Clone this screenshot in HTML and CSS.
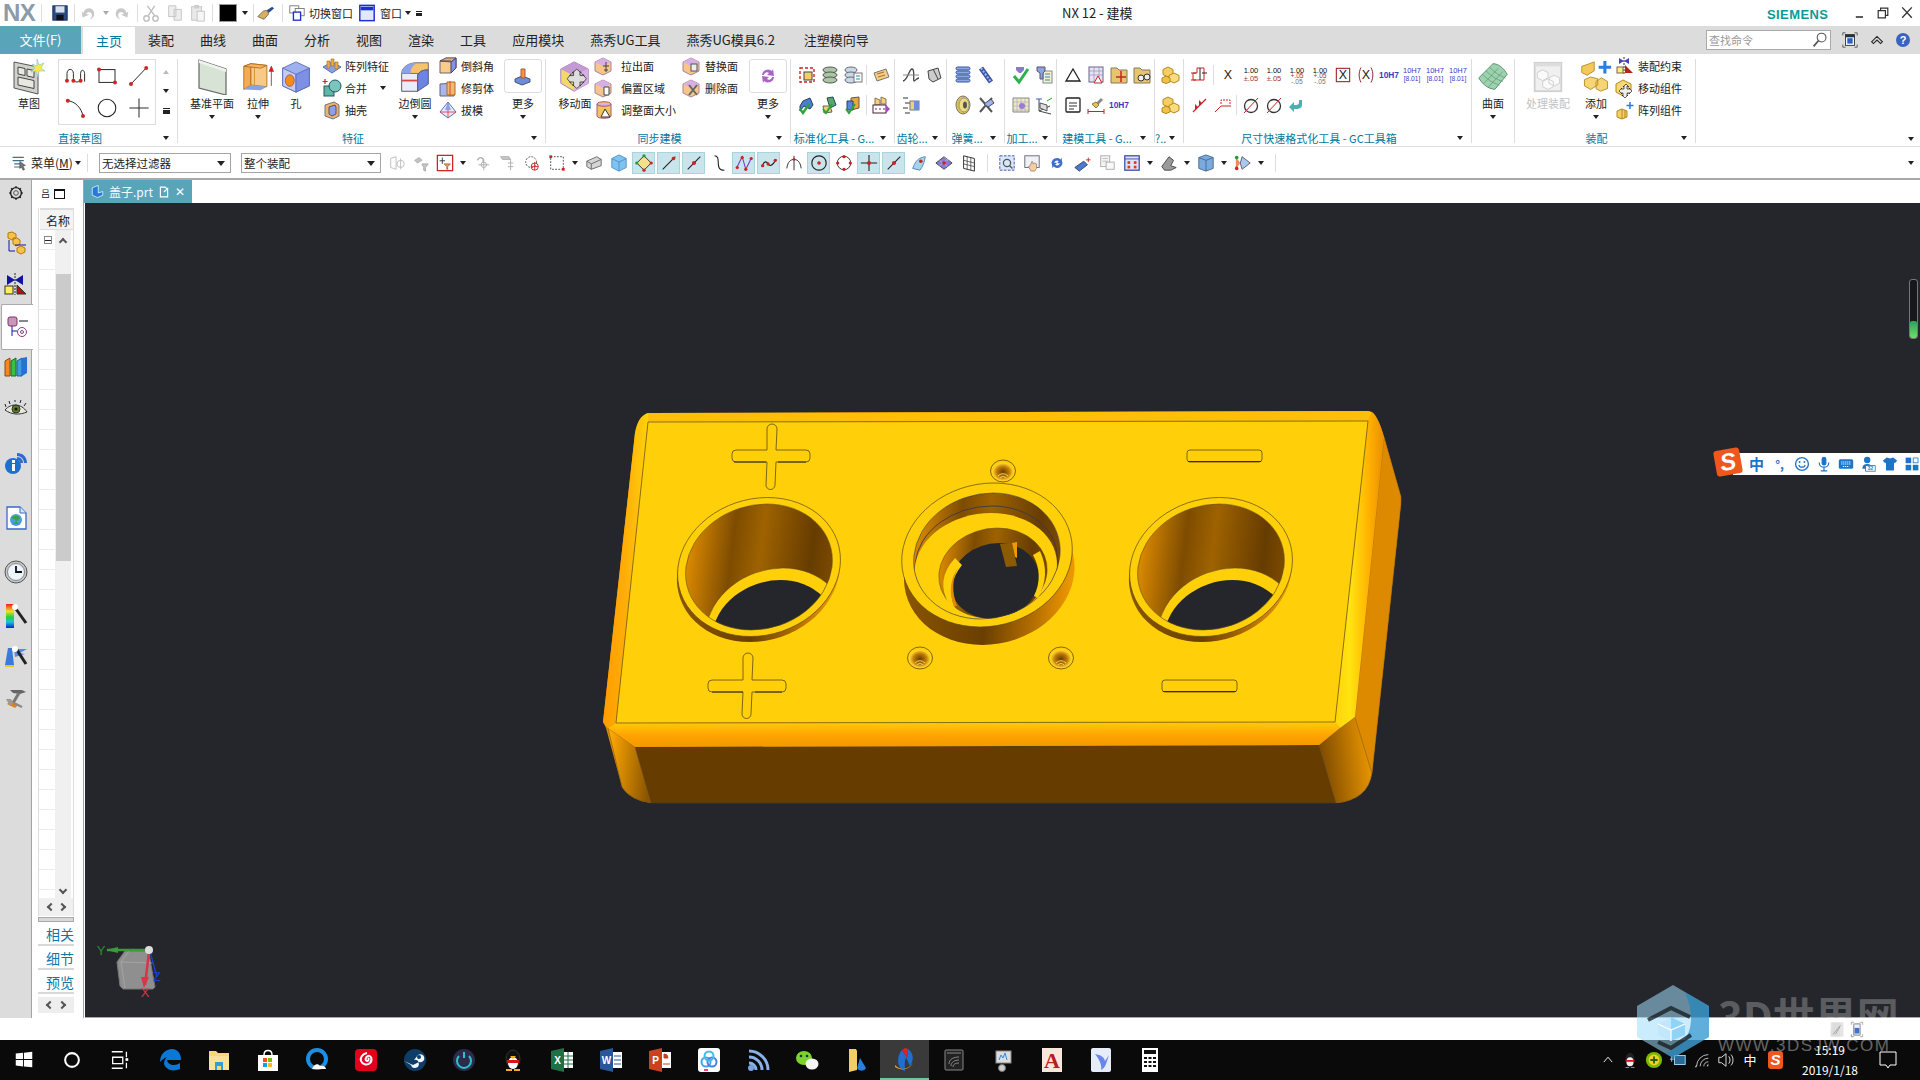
FILE: index.html
```html
<!DOCTYPE html>
<html lang="zh-CN">
<head>
<meta charset="utf-8">
<title>NX 12 - 建模</title>
<link rel="stylesheet" href="styles.css">
</head>
<body>
<svg class="defs" width="0" height="0">
<defs>
<symbol id="cube-y" viewBox="0 0 20 20"><path d="M10 2l7 4v8l-7 4-7-4V6z" fill="#f6cf62" stroke="#b5881c"/><path d="M3 6l7 4 7-4M10 10v8" fill="none" stroke="#b5881c"/></symbol>
<symbol id="cubes" viewBox="0 0 20 20"><path d="M7 2l5 2.500v5L7 12 2 9.500v-5z" fill="#f6cf62" stroke="#b5881c"/><path d="M13 8l5 2.500v5L13 18l-5-2.500v-5z" fill="#f9dc80" stroke="#b5881c"/><path d="M5 11l4 2v4l-4 1.500L1 17v-4z" fill="#f1c14a" stroke="#b5881c"/></symbol>
<symbol id="sk" viewBox="0 0 32 36"><path d="M1 3l24 5v27L1 29z" fill="#cfd2cc" stroke="#555"/><path d="M5 8l7 1.500v7l-7-1.500zM14 10l7 1.500v7l-7-1.500zM5 18l16 3.500v8L5 26z" fill="#e8e8e0" stroke="#444"/><path d="M24 0l2 6 5-2-3 5 4 3-6 0-1 6-2-6-5 1 4-4-3-4 5 2z" fill="#ffe94a" stroke="#7cc5d8" stroke-width=".6"/></symbol>
<symbol id="spl" viewBox="0 0 30 30"><path d="M5 22V12c0-7 8-7 8 0v6c0 6 9 6 9 0v-6c0-6 5-5 5 0v10" fill="none" stroke="#222" stroke-width="1.200"/><g fill="#d32323"><circle cx="5" cy="21" r="2.500"/><circle cx="13" cy="21" r="2.500"/><circle cx="22" cy="21" r="2.500"/></g></symbol>
<symbol id="rct" viewBox="0 0 30 30"><rect x="5" y="7" width="20" height="16" fill="none" stroke="#222" stroke-width="1.200"/><circle cx="5" cy="7" r="2.500" fill="#d32323"/><circle cx="25" cy="23" r="2.500" fill="#d32323"/></symbol>
<symbol id="lin" viewBox="0 0 30 30"><path d="M5 25L24 5" stroke="#222" stroke-width="1.200"/><circle cx="5" cy="25" r="2.500" fill="#d32323"/><circle cx="24" cy="5" r="2.500" fill="#d32323"/></symbol>
<symbol id="arc" viewBox="0 0 30 30"><path d="M5 6c10 0 18 9 20 19" fill="none" stroke="#222" stroke-width="1.200"/><circle cx="6" cy="6" r="2.500" fill="#d32323"/><circle cx="25" cy="25" r="2.500" fill="#d32323"/></symbol>
<symbol id="cir" viewBox="0 0 30 30"><circle cx="15" cy="15" r="11" fill="none" stroke="#222" stroke-width="1.300"/></symbol>
<symbol id="crs" viewBox="0 0 30 30"><path d="M15 3v24M3 15h24" stroke="#222" stroke-width="1.200"/></symbol>
<symbol id="plane" viewBox="0 0 32 36"><path d="M3 1l27 9v26L3 29z" fill="#d7e4d5" stroke="#666" stroke-width="1.200"/><path d="M3 1l27 9v3L3 4z" fill="#eef3ec"/></symbol>
<symbol id="extr" viewBox="0 0 36 36"><path d="M2 6l8-3v24l-8 5z" fill="#f1ad55" stroke="#b36a18"/><path d="M10 3l18 2v24l-18-2z" fill="#f8c987" stroke="#b36a18"/><path d="M2 6l8-3 18 2-7 3z" fill="#f4b565" stroke="#b36a18"/><path d="M14 8v22" stroke="#d18a2a"/><path d="M2 32l8-5 18 2-7 4z" fill="#8da0e0"/><path d="M33 28V8M30.500 12L33 6l2.500 6" stroke="#d02020" fill="#d02020"/></symbol>
<symbol id="hole" viewBox="0 0 36 36"><path d="M18 1l15 7v20l-15 7-15-7V8z" fill="#9fb0f0" stroke="#5a6bb8"/><path d="M3 8l15 7v20l-15-7z" fill="#c1ccf6" stroke="#5a6bb8"/><path d="M18 15l15-7v20l-15 7z" fill="#7d90e4" stroke="#5a6bb8"/><ellipse cx="11" cy="22" rx="5" ry="6.500" fill="#f18d1a" stroke="#a55"/></symbol>
<symbol id="blend" viewBox="0 0 36 36"><path d="M3 14c0-7 8-12 16-12h14v8c-8 0-12 3-12 8v16H3z" fill="#f6c36c" stroke="#666"/><path d="M3 14h18v20H3z" fill="#e9edf8" stroke="#667"/><path d="M3 14c0-7 8-12 16-12l2 0c-5 2-8 6-8 12z" fill="#8ca0ec"/><path d="M21 18c0-5 4-8 12-8v16l-12 8z" fill="#6c84e6" stroke="#557"/><path d="M3 22h18" stroke="#d44" stroke-width="2"/></symbol>
<symbol id="pat" viewBox="0 0 20 20"><path d="M1 11l9-5 9 5-9 6z" fill="#8aa0e6" stroke="#5a6bb8"/><path d="M5 5h3v7H5zM9 3h3v7H9zM13 6h3v7h-3z" fill="#f0ad3e" stroke="#b0741a" stroke-width=".7"/></symbol>
<symbol id="unite" viewBox="0 0 20 20"><rect x="2" y="8" width="10" height="10" fill="#5fb6a5" stroke="#256"/><circle cx="13" cy="8" r="6" fill="#7ac6bd" stroke="#256"/><path d="M3 1v5M.5 3.500h5" stroke="#d02020" stroke-width="1.200"/></symbol>
<symbol id="shell" viewBox="0 0 20 20"><path d="M3 5l9-3 5 3v11l-6 3-8-3z" fill="#f0b268" stroke="#678"/><path d="M7 7l6-2 1 2v7l-4 2-3-2z" fill="#8ca0ec" stroke="#556"/></symbol>
<symbol id="chamf" viewBox="0 0 20 20"><path d="M2 5l6-3h10v10l-5 5H2z" fill="#f8cc8a" stroke="#667"/><path d="M2 5l6-3 10 0-5 4z" fill="#f1ac62" stroke="#667"/><path d="M13 6l5-4v10l-5 5zM2 5h11" fill="#7f94e8" stroke="#446"/></symbol>
<symbol id="trim" viewBox="0 0 20 20"><path d="M2 6l14-1v13H2z" fill="#a8b6ee" stroke="#667"/><path d="M9 4h8v13H9z" fill="#f3b96f" stroke="#b36a18"/><path d="M12 3v15" stroke="#d44"/></symbol>
<symbol id="draft" viewBox="0 0 20 20"><path d="M10 2L2 12l8 6 8-6z" fill="#e8eaf8" stroke="#5a6bb8"/><path d="M10 2v16M2 12h16" stroke="#d44" stroke-width=".9"/><path d="M10 2l-3 8h6z" fill="#8ca0ec"/></symbol>
<symbol id="more" viewBox="0 0 20 20"><path d="M2 13l7-3 8 3v3l-8 3-7-3z" fill="#6f8bdc" stroke="#456"/><path d="M8 3h4v9H8z" fill="#f49a2c" stroke="#a55"/></symbol>
<symbol id="move" viewBox="0 0 36 36"><path d="M17 1l16 8v16l-16 9L2 25V9z" fill="#f3d86e" stroke="#9c77b8"/><path d="M17 1l16 8-16 8L2 9z" fill="#c49ad6"/><path d="M17 17l16-8v16l-16 9z" fill="#d8aee6"/><path d="M24 11v5h5l-2-2 5 6-5 6 2-2h-5v5l2-2-6 5-6-5 2 2v-5h-5l2 2-5-6 5-6-2 2h5v-5l-2 2 6-5 6 5z" transform="translate(2 2) scale(.9)" fill="#ddd" stroke="#333"/></symbol>
<symbol id="fpull" viewBox="0 0 20 20"><path d="M9 2l8 4v9l-8 4-8-4V6z" fill="#f6c58a" stroke="#a6839c"/><path d="M9 2l8 4-8 4-8-4z" fill="#d8aee6"/><path d="M12 6v10M9 10h6M10 14h4" stroke="#444"/></symbol>
<symbol id="foff" viewBox="0 0 20 20"><path d="M9 2l8 4v9l-8 4-8-4V6z" fill="#f6c58a" stroke="#a6839c"/><path d="M9 2l8 4-8 4-8-4z" fill="#d8aee6"/><path d="M10 9h5v8h-5z" fill="#fff" stroke="#444"/></symbol>
<symbol id="fres" viewBox="0 0 20 20"><path d="M3 4c0-3 14-3 14 0v12c0 3-14 3-14 0z" fill="#f0c65c" stroke="#a57"/><path d="M3 4c0 3 14 3 14 0" fill="#d8aee6" stroke="#a57"/><path d="M11 9l5 8H7z" fill="#fff" stroke="#333"/></symbol>
<symbol id="frep" viewBox="0 0 20 20"><path d="M9 2l8 4v9l-8 4-8-4V6z" fill="#f6c58a" stroke="#a6839c"/><path d="M9 2l8 4-8 4-8-4z" fill="#d8aee6"/><rect x="9" y="8" width="6" height="7" fill="#eee" stroke="#555"/></symbol>
<symbol id="fdel" viewBox="0 0 20 20"><path d="M9 2l8 4v9l-8 4-8-4V6z" fill="#f6c58a" stroke="#a6839c"/><path d="M9 2l8 4-8 4-8-4z" fill="#d8aee6"/><path d="M7 7l8 10M15 7l-8 10" stroke="#666" stroke-width="2"/></symbol>
<symbol id="rec" viewBox="0 0 20 20"><path d="M4 9a6 6 0 0 1 10-4l1-2 1 7-7-1 2-2a3 3 0 0 0-5 2zM16 11a6 6 0 0 1-10 4l-1 2-1-7 7 1-2 2a3 3 0 0 0 5-2z" fill="#a964c4"/></symbol>
<symbol id="t1" viewBox="0 0 20 20"><rect x="3" y="3" width="14" height="14" fill="none" stroke="#c22" stroke-dasharray="3 2" stroke-width="1.400"/><rect x="7" y="7" width="8" height="8" fill="#f6cf62" stroke="#444"/></symbol>
<symbol id="t2" viewBox="0 0 20 20"><g fill="#a9c7a4" stroke="#555"><ellipse cx="10" cy="5" rx="7" ry="3"/><ellipse cx="10" cy="10" rx="7" ry="3"/><ellipse cx="10" cy="15" rx="7" ry="3"/></g></symbol>
<symbol id="t3" viewBox="0 0 20 20"><g fill="#c9d9e5" stroke="#667"><ellipse cx="8" cy="5" rx="6" ry="3"/><ellipse cx="8" cy="10" rx="6" ry="3"/><ellipse cx="8" cy="15" rx="6" ry="3"/></g><rect x="11" y="8" width="8" height="9" fill="#fff" stroke="#777"/><path d="M13 11h4M13 14h4" stroke="#38a"/></symbol>
<symbol id="t4" viewBox="0 0 20 20"><path d="M3 8l12-4 3 8-12 4z" fill="#f2cf7f" stroke="#777"/><path d="M6 9l7-2M7 12l7-2" stroke="#a64"/></symbol>
<symbol id="t5" viewBox="0 0 20 20"><path d="M3 16l4-5 6 3 3-4-3-7-7 3-3 5z" fill="#4c7cd6" stroke="#245"/><path d="M3 14l3 4 6-9" fill="none" stroke="#2aa53a" stroke-width="2.400"/></symbol>
<symbol id="t6" viewBox="0 0 20 20"><path d="M7 3l6-1 3 8-6 3z" fill="#58a86a" stroke="#246"/><path d="M3 11l7 0 2 6-8 1z" fill="#ecd170" stroke="#665"/><path d="M3 14l3 4 6-9" fill="none" stroke="#2aa53a" stroke-width="2"/></symbol>
<symbol id="t7" viewBox="0 0 20 20"><path d="M8 3l8-1v11l-8 2z" fill="#e8a83a" stroke="#654"/><path d="M4 6l6 0v9H4z" fill="#5a86dc" stroke="#245"/><path d="M3 14l3 4 6-9" fill="none" stroke="#2aa53a" stroke-width="2"/></symbol>
<symbol id="t8" viewBox="0 0 20 20"><path d="M4 3l5 2v5H4zM10 2l5 2v5h-5z" fill="#f2cf7f" stroke="#875"/><rect x="2" y="10" width="13" height="8" fill="#fff" stroke="#423"/><path d="M4 14h2M8 14h2M12 14h2" stroke="#824"/><path d="M15 10l4 4-4 4z" fill="#a848c0"/></symbol>
<symbol id="g1" viewBox="0 0 20 20"><path d="M2 16c5-1 6-12 9-12s1 12 2 12 3-3 5-3" fill="none" stroke="#444" stroke-width="1.300"/><path d="M2 10h16" stroke="#888"/></symbol>
<symbol id="g2" viewBox="0 0 20 20"><path d="M4 6l10-3 3 10-8 4-4-3z" fill="#ccc" stroke="#444"/><path d="M9 4l5 10" stroke="#444"/></symbol>
<symbol id="g3" viewBox="0 0 20 20"><path d="M2 3h5M4 8h5M2 13h5M4 18h5" stroke="#333"/><rect x="9" y="6" width="9" height="9" fill="#f0cf7a" stroke="#778"/><rect x="13" y="6" width="5" height="9" fill="#6f8fd4"/></symbol>
<symbol id="sp1" viewBox="0 0 20 20"><g fill="#8ea6e4" stroke="#33559c"><rect x="3" y="2" width="14" height="3" rx="1.500"/><rect x="3" y="6" width="14" height="3" rx="1.500"/><rect x="3" y="10" width="14" height="3" rx="1.500"/><rect x="3" y="14" width="14" height="3" rx="1.500"/></g></symbol>
<symbol id="sp2" viewBox="0 0 20 20"><path d="M5 3l10 14" stroke="#3a56a8" stroke-width="5"/><path d="M5 3l10 14" stroke="#a8b8ea" stroke-width="2" stroke-dasharray="2 1.500"/></symbol>
<symbol id="sp3" viewBox="0 0 20 20"><ellipse cx="10" cy="10" rx="7" ry="9" fill="#dcc055" stroke="#776"/><ellipse cx="11" cy="10" rx="5" ry="7" fill="#efdc80" stroke="#997"/><ellipse cx="12" cy="10" rx="2" ry="3.500" fill="#555"/></symbol>
<symbol id="sp4" viewBox="0 0 20 20"><path d="M4 3l12 14M16 3L4 17" stroke="#555" stroke-width="2"/><path d="M8 9l7-5 3 4-6 4z" fill="#9fb2e6" stroke="#446"/></symbol>
<symbol id="m1" viewBox="0 0 20 20"><path d="M5 2h8v3l-3 3H8L5 5z" fill="#8a7ac8"/><path d="M3 11l5 6 9-13" fill="none" stroke="#2bb14d" stroke-width="3"/></symbol>
<symbol id="m2" viewBox="0 0 20 20"><rect x="9" y="6" width="9" height="12" fill="#f4f0d4" stroke="#888"/><path d="M11 9h5M11 12h5M11 15h5" stroke="#38a"/><path d="M3 2h8v4l-2 2v6H6V8L3 6z" fill="#8ea3e6" stroke="#556"/></symbol>
<symbol id="m3" viewBox="0 0 20 20"><path d="M2 3h16v14H2z" fill="#ece8c8" stroke="#888"/><path d="M2 7h16M2 11h16M2 15h16M6 3v14M10 3v14M14 3v14" stroke="#aaa" stroke-width=".6"/><circle cx="11" cy="11" r="3" fill="#9a7ae0"/></symbol>
<symbol id="m4" viewBox="0 0 20 20"><path d="M5 4v12l11-5M5 16l12 3" fill="none" stroke="#444"/><path d="M6 8l7 2v6l-7-3z" fill="#ddd" stroke="#555"/><path d="M2 4h6" stroke="#36c"/><path d="M13 6l5-3" stroke="#2a2"/></symbol>
<symbol id="b1" viewBox="0 0 20 20"><path d="M10 4l7 12H3z" fill="none" stroke="#222" stroke-width="1.300"/></symbol>
<symbol id="b2" viewBox="0 0 20 20"><rect x="3" y="2" width="14" height="15" fill="#e8e2f6" stroke="#668"/><path d="M3 6h14M3 10h14M8 2v15M13 2v15" stroke="#88a" stroke-width=".6"/><path d="M12 11l4 7H8z" fill="#fff" stroke="#c22"/></symbol>
<symbol id="b3" viewBox="0 0 20 20"><path d="M2 3h6l2 2h8v13H2z" fill="#e6c66c" stroke="#876"/><path d="M12 6v11M7 12h10" stroke="#c22" stroke-width="1.500"/></symbol>
<symbol id="b4" viewBox="0 0 20 20"><path d="M2 3h6l2 2h8v13H2z" fill="#e6c66c" stroke="#876"/><circle cx="9" cy="13" r="3" fill="#eee" stroke="#333"/><circle cx="15" cy="12" r="3" fill="#eee" stroke="#333"/></symbol>
<symbol id="b5" viewBox="0 0 20 20"><rect x="3" y="3" width="14" height="14" rx="1" fill="#fff" stroke="#222" stroke-width="1.300"/><path d="M6 8h8M6 11h8M6 14h5" stroke="#333"/></symbol>
<symbol id="b6" viewBox="0 0 20 20"><path d="M15 3l-5 5 2 2 5-5z" fill="#888"/><path d="M10 7l3 3-3 3-4-4z" fill="#e8c24a" stroke="#875"/><path d="M2 14v5M18 14v5M2 16.500h16" stroke="#c22"/></symbol>
<symbol id="tol" viewBox="0 0 24 24"><text x="12" y="10" class="svg-t8" fill="#111">1.00</text><text x="12" y="19" class="svg-t8" fill="#a33">±.05</text></symbol>
<symbol id="tol2" viewBox="0 0 24 24"><text x="12" y="9" class="svg-t8" fill="#111">1.00</text><text x="12" y="16" class="svg-t6" fill="#a33">+.05</text><text x="12" y="23" class="svg-t6" fill="#777">-.05</text></symbol>
<symbol id="hs" viewBox="0 0 24 24"><text x="12" y="15" class="svg-hb" fill="#3a3ac8">10H7</text></symbol>
<symbol id="hb" viewBox="0 0 24 24"><text x="12" y="9" class="svg-t8" fill="#3a3ac8">10H7</text><text x="12" y="19" class="svg-t7" fill="#3a3ac8">[8.01]</text></symbol>
<symbol id="x1" viewBox="0 0 24 24"><text x="12" y="17" class="svg-t14" fill="#222">X</text></symbol>
<symbol id="x2" viewBox="0 0 24 24"><rect x="4" y="4" width="16" height="16" fill="none" stroke="#923" stroke-width="1.300"/><text x="12" y="17" class="svg-t14" fill="#222">X</text></symbol>
<symbol id="x3" viewBox="0 0 24 24"><path d="M6 3c-3 6-3 12 0 18M18 3c3 6 3 12 0 18" fill="none" stroke="#923" stroke-width="1.200"/><text x="12" y="17" class="svg-t14" fill="#222">X</text></symbol>
<symbol id="d1" viewBox="0 0 20 20"><path d="M3 15v-7h4v-5h7v12zM1 8h5M1 15h5" fill="none" stroke="#c22"/><path d="M10 3v12M12 8h5" stroke="#222"/></symbol>
<symbol id="d2" viewBox="0 0 20 20"><path d="M3 17L16 4" stroke="#c22" stroke-width="1.200"/><path d="M5 9l3 3-3 3zM9 5l3 3-3 3z" fill="#c22"/></symbol>
<symbol id="d3" viewBox="0 0 20 20"><path d="M2 17l6-6h10" fill="none" stroke="#c22"/><path d="M8 9V5h9v4" fill="none" stroke="#c22" stroke-dasharray="2 1"/></symbol>
<symbol id="d4" viewBox="0 0 20 20"><circle cx="10" cy="11" r="6.500" fill="none" stroke="#333" stroke-width="1.300"/><path d="M3 18L17 3" stroke="#c22"/></symbol>
<symbol id="ret" viewBox="0 0 20 20"><path d="M15 5v5c0 3-3 4-6 4H7v3l-5-5 5-5v3h2c2 0 3-1 3-3V5z" fill="#4bb0b0"/></symbol>
<symbol id="surf" viewBox="0 0 36 36"><path d="M2 19L18 3c6 0 12 5 16 12L20 32c-8-1-14-6-18-13z" fill="#9ed1ae" stroke="#4e8a68"/><path d="M6 15c6 6 12 10 19 12M10 11c6 6 12 10 19 12M14 7c6 6 12 10 18 12M8 25L24 8M13 29L29 12" fill="none" stroke="#5b9a78" stroke-width=".8"/></symbol>
<symbol id="proc" viewBox="0 0 36 36"><rect x="3" y="2" width="30" height="32" fill="#f0f0f0" stroke="#cfcfcf" stroke-width="2"/><path d="M3 2h30v4H3z" fill="#ddd"/><path d="M12 10l6 3v6l-6 3-6-3v-6zM18 20l6 3v6l-6 3-6-3v-6zM25 16l6 3v6l-6 3-6-3v-6z" fill="#fafafa" stroke="#ccc"/></symbol>
<symbol id="add" viewBox="0 0 36 36"><path d="M8 4l8-3v10l-8 5-6-3V6z" fill="#f4c95a" stroke="#b5881c"/><path d="M12 18l8 2v7l-8 5-7-4v-7zM24 19l7 4v8l-8 3-5-3v-8z" fill="#f6d576" stroke="#b5881c"/><path d="M28 0v14M21 7h14" stroke="#2c7be0" stroke-width="3.400"/></symbol>
<symbol id="asm1" viewBox="0 0 20 20"><path d="M4 2l5 3 5-3v6l-5-3-5 3z" fill="#4a44c2"/><path d="M9 1v18" stroke="#333" stroke-dasharray="2 1"/><rect x="2" y="11" width="6" height="6" fill="#ffee7a" stroke="#765"/><path d="M10 17v-8l8 8z" fill="#b82418"/></symbol>
<symbol id="asm2" viewBox="0 0 20 20"><path d="M8 2l8 4v8l-8 4-7-4V6z" fill="#f8d778" stroke="#b5881c"/><path d="M12 8v3h3l-1-1 3 3-3 3 1-1h-3v3l1-1-3 3-3-3 1 1v-3H6l1 1-3-3 3-3-1 1h3v-3l-1 1 3-3 3 3z" fill="#eee" stroke="#222" stroke-width=".7"/></symbol>
<symbol id="asm3" viewBox="0 0 20 20"><path d="M2 11l5-2 5 2v6l-5 2-5-2z" fill="#f6cf62" stroke="#b5881c"/><path d="M7 9v10M10 10v8" stroke="#b5881c"/><path d="M15 2v7M11.500 5.500h7" stroke="#2c7be0" stroke-width="1.500"/></symbol>
<symbol id="undo" viewBox="0 0 20 20"><path d="M5 10c1-7 11-7 12 0 0 4-2 6-5 7 2-2 3-4 2-6-1-3-5-3-6 0l3 1-7 3-1-7z" fill="#c8c8c8"/></symbol>
<symbol id="redo" viewBox="0 0 20 20"><path d="M15 10c-1-7-11-7-12 0 0 4 2 6 5 7-2-2-3-4-2-6 1-3 5-3 6 0l-3 1 7 3 1-7z" fill="#c8c8c8"/></symbol>
<symbol id="f1" viewBox="0 0 20 20"><g fill="none" stroke="#bbb"><path d="M3 5l6-2v14l-6-2z"/><circle cx="14" cy="11" r="4"/><path d="M14 5v12"/></g></symbol>
<symbol id="f2" viewBox="0 0 20 20"><path d="M3 7l5-3 3 3-5 3zM11 11h7l-3 4v4l-2-1v-3z" fill="#c4c4c4" stroke="#aaa"/></symbol>
<symbol id="f3" viewBox="0 0 20 20"><rect x="1.500" y="1.500" width="17" height="17" fill="#fff" stroke="#c22" stroke-width="1.400"/><path d="M7 4v7M4 7.500h6" stroke="#333"/><path d="M9 11h7l-3 3v3l-1 0v-3z" fill="#e8a820" stroke="#a66"/></symbol>
<symbol id="f4" viewBox="0 0 20 20"><path d="M5 7c2-5 8-3 6 2" fill="none" stroke="#aaa" stroke-width="1.500"/><path d="M12 6v12M6 12h12" stroke="#aaa"/><circle cx="12" cy="12" r="3" fill="none" stroke="#aaa"/></symbol>
<symbol id="f5" viewBox="0 0 20 20"><path d="M3 3h9l2 3-9 0zM14 6v12M11 10h6M11 14h6" fill="#c8c8c8" stroke="#aaa"/></symbol>
<symbol id="f6" viewBox="0 0 20 20"><circle cx="9" cy="9" r="6" fill="none" stroke="#444" stroke-dasharray="2 1.500"/><circle cx="13" cy="14" r="4" fill="none" stroke="#c22"/><path d="M13 9v9M9 14h8" stroke="#c22"/></symbol>
<symbol id="f7" viewBox="0 0 20 20"><rect x="3" y="3" width="14" height="14" fill="none" stroke="#444" stroke-dasharray="2 1.500"/><rect x="1.500" y="1.500" width="3" height="3" fill="#c22"/><rect x="15.500" y="15.500" width="3" height="3" fill="#c22"/></symbol>
<symbol id="f8" viewBox="0 0 20 20"><path d="M2 8l11-5 5 3v7L7 17l-5-3z" fill="#d5d5d5" stroke="#666"/><path d="M2 8l5 3v6M7 11l11-5" fill="none" stroke="#666"/></symbol>
<symbol id="f9" viewBox="0 0 20 20"><path d="M10 1l8 4v10l-8 4-8-4V5z" fill="#7fc4ef" stroke="#4a90c8"/><path d="M2 5l8 4 8-4M10 9v10" fill="none" stroke="#4a90c8"/></symbol>
<symbol id="f10" viewBox="0 0 20 20"><path d="M10 2l8 8-8 8-8-8z" fill="#f4e08a" stroke="#222"/><circle cx="10" cy="2" r="1.800" fill="#1a9e33"/><circle cx="18" cy="10" r="1.800" fill="#c22"/><circle cx="10" cy="18" r="1.800" fill="#c22"/><circle cx="2" cy="10" r="1.800" fill="#1a9e33"/></symbol>
<symbol id="f11" viewBox="0 0 20 20"><path d="M3 17L17 3" stroke="#222" stroke-width="1.200"/><circle cx="15" cy="5" r="2" fill="#c22"/></symbol>
<symbol id="f12" viewBox="0 0 20 20"><path d="M3 17L17 3" stroke="#222" stroke-width="1.200"/><circle cx="10" cy="10" r="2.300" fill="#c22"/></symbol>
<symbol id="f13" viewBox="0 0 20 20"><path d="M5 2c6 0 3 8 5 13 1 3 3 3 6 3" fill="none" stroke="#222" stroke-width="1.200"/></symbol>
<symbol id="f14" viewBox="0 0 20 20"><path d="M2 15L8 3l4 14 6-12" fill="none" stroke="#7a3ac8" stroke-width="1.200"/><g fill="#c22"><circle cx="2.500" cy="15" r="1.800"/><circle cx="8" cy="4" r="1.800"/><circle cx="12" cy="17" r="1.800"/><circle cx="18" cy="5" r="1.800"/></g></symbol>
<symbol id="f15" viewBox="0 0 20 20"><path d="M2 14c3-7 5-6 7-3s4 3 9-5" fill="none" stroke="#222" stroke-width="1.200"/><g fill="#c22"><circle cx="3" cy="13" r="1.800"/><circle cx="9" cy="11" r="1.800"/><circle cx="17" cy="7" r="1.800"/></g></symbol>
<symbol id="f16" viewBox="0 0 20 20"><path d="M10 2v16M2 16C3 8 7 6 10 6s7 2 8 10" fill="none" stroke="#222"/><circle cx="10" cy="6" r="1.500" fill="#c22"/></symbol>
<symbol id="f17" viewBox="0 0 20 20"><circle cx="10" cy="10" r="8" fill="none" stroke="#222" stroke-width="1.300"/><circle cx="10" cy="10" r="2" fill="#c22"/></symbol>
<symbol id="f18" viewBox="0 0 20 20"><circle cx="10" cy="10" r="7.500" fill="none" stroke="#222"/><g fill="#c22"><circle cx="10" cy="3" r="1.800"/><circle cx="10" cy="17" r="1.800"/><circle cx="3" cy="10" r="1.800"/><circle cx="17" cy="10" r="1.800"/></g></symbol>
<symbol id="f19" viewBox="0 0 20 20"><path d="M10 1v18M1 10h18" stroke="#222" stroke-width="1.200"/><circle cx="10" cy="10" r="2.200" fill="#c22"/></symbol>
<symbol id="f20" viewBox="0 0 20 20"><path d="M3 16c3-9 7-12 14-13-1 7-3 11-6 15z" fill="#a8d2ec" stroke="#4a84b8"/><circle cx="12" cy="8" r="2" fill="#c22"/></symbol>
<symbol id="f21" viewBox="0 0 20 20"><path d="M1 10l9-7 9 7-9 7z" fill="#8a7ad8" stroke="#444"/><path d="M5 7l9 7M10 3l5 5M5 13l9-7" stroke="#ccc" stroke-width=".7"/><circle cx="10" cy="10" r="2" fill="#c22"/></symbol>
<symbol id="f22" viewBox="0 0 20 20"><path d="M4 2l12 3v14l-12-3z" fill="none" stroke="#222"/><path d="M8 3v14M12 4v14M4 7l12 3M4 11l12 3" stroke="#222" stroke-width=".7"/></symbol>
<symbol id="v1" viewBox="0 0 20 20"><rect x="2" y="2" width="16" height="16" fill="#d9e7f8" stroke="#3a4aa8" stroke-dasharray="3 1.500"/><circle cx="10" cy="10" r="4" fill="none" stroke="#555" stroke-width="1.400"/><path d="M13 13l3 3" stroke="#555" stroke-width="1.500"/></symbol>
<symbol id="v2" viewBox="0 0 20 20"><rect x="2" y="2" width="16" height="13" fill="#eef1fb" stroke="#666"/><path d="M10 8c1 0 1 3 1 3l2-1 2 1v5l-2 3h-4l-3-5 2-1z" fill="#f1cf9e" stroke="#a87"/></symbol>
<symbol id="v3" viewBox="0 0 20 20"><path d="M4 11a6 6 0 0 1 10-5l1-2 1 7-6-1 2-2a3.500 3.500 0 0 0-5.500 3zM16 9a6 6 0 0 1-10 5l-1 2-1-7 6 1-2 2a3.500 3.500 0 0 0 5.500-3z" fill="#3e70c8"/></symbol>
<symbol id="v4" viewBox="0 0 20 20"><path d="M2 15l10-7 4 4-9 7z" fill="#4a78d4" stroke="#345"/><path d="M17 4v5M14.500 6.500h5" stroke="#c22"/></symbol>
<symbol id="v5" viewBox="0 0 20 20"><rect x="3" y="2" width="10" height="12" fill="#f4f4f4" stroke="#aaa"/><path d="M5 5h6M5 8h6" stroke="#bbb"/><rect x="9" y="9" width="9" height="8" fill="#f8f8f8" stroke="#aaa"/></symbol>
<symbol id="v6" viewBox="0 0 20 20"><rect x="2" y="2" width="16" height="16" fill="#e0e4fa" stroke="#3a4aa8" stroke-width="1.400"/><path d="M2 5.500h16" stroke="#3a4aa8"/><g fill="#d93a20"><rect x="5" y="8" width="3" height="3"/><rect x="12" y="8" width="3" height="3"/><rect x="5" y="13" width="3" height="3"/><rect x="12" y="13" width="3" height="3"/></g></symbol>
<symbol id="v7" viewBox="0 0 20 20"><path d="M2 14l8-11 5 4-3 6 6 2-6 3H5z" fill="#9a9a9a" stroke="#444"/></symbol>
<symbol id="v8" viewBox="0 0 20 20"><path d="M10 1l8 3v12l-8 3-8-3V4z" fill="#7aaade" stroke="#44688e"/><path d="M2 4l8 3 8-3M10 7v12" fill="none" stroke="#44688e"/></symbol>
<symbol id="v9" viewBox="0 0 20 20"><path d="M9 3l9 7-9 7-2-7z" fill="#a8c8f0" stroke="#556"/><path d="M7 10L2 3v14z" fill="#ef8a5a"/><circle cx="3" cy="4" r="2" fill="#1a9e33"/><circle cx="3" cy="16" r="2" fill="#c22"/></symbol>
<symbol id="r1" viewBox="0 0 24 24"><path d="M4 2l4-1 4 2v4l-4 2-4-2zM9 7l4 0 3 2v4l-4 2-3-2z" fill="#f4c34a" stroke="#b5780c"/><path d="M5 9v11h6M11 14h11" fill="none" stroke="#1414a0"/><path d="M13 17l4-2 4 2v4l-4 2-4-2z" fill="#f4c34a" stroke="#b5780c"/></symbol>
<symbol id="r2" viewBox="0 0 24 24"><path d="M3 3l8 5 8-5v10l-8-5-8 5z" fill="#1212a8"/><path d="M11 1v22" stroke="#222" stroke-dasharray="2 1"/><rect x="1" y="14" width="8" height="8" fill="#ffee55" stroke="#333"/><path d="M13 22v-9l9 9z" fill="#b81010" stroke="#333"/></symbol>
<symbol id="r3" viewBox="0 0 24 24"><rect x="3" y="2" width="9" height="9" rx="2" fill="#c998b8" stroke="#803070"/><path d="M14 6h9" stroke="#111"/><path d="M7 11v10M7 16h5" stroke="#1212a8"/><circle cx="17" cy="17" r="4.500" fill="none" stroke="#8a3a80"/><circle cx="17" cy="17" r="1.500" fill="none" stroke="#8a3a80"/></symbol>
<symbol id="r4" viewBox="0 0 24 24"><path d="M1 5l5-3v18H1z" fill="#f08a20" stroke="#8a4a10"/><path d="M7 5l5-3v18H7z" fill="#36c046" stroke="#186a20"/><path d="M13 5l5-3v18h-5z" fill="#3a9ee0" stroke="#1860a0"/><path d="M18 2l5-1v16l-5 3z" fill="#2a70d0"/></symbol>
<symbol id="r5" viewBox="0 0 24 24"><path d="M1 13c6-7 16-7 22 2-7 3-15 3-22-2z" fill="#e9e7dd" stroke="#333"/><circle cx="12" cy="12" r="4" fill="#5b7f1e" stroke="#333"/><circle cx="12" cy="12" r="1.500" fill="#111"/><path d="M2 10L1 7M6 7L5 4M11 5V3M16 6l1-3M20 9l2-3" stroke="#222"/></symbol>
<symbol id="r6" viewBox="0 0 24 24"><path d="M13 1c6 0 10 4 10 10h-3c0-4-3-7-7-7zM13 5c4 0 6 3 6 6h-3c0-2-1-3-3-3z" fill="#2f6ad0"/><circle cx="9" cy="14" r="8" fill="#1d6fd0"/><rect x="8" y="12" width="3" height="7" fill="#fff"/><rect x="8" y="8" width="3" height="3" fill="#fff"/></symbol>
<symbol id="r7" viewBox="0 0 24 24"><path d="M3 1h13l6 6v16H3z" fill="#fff" stroke="#3a6ac8" stroke-width="1.300"/><path d="M16 1v6h6" fill="#d8e8fa" stroke="#3a6ac8"/><circle cx="12" cy="14" r="6" fill="#4a9fd6"/><path d="M7 12c3-3 7-3 9 0l-3 3-3-2zM9 18l3-3 3 3z" fill="#3aa33c"/></symbol>
<symbol id="r8" viewBox="0 0 24 24"><circle cx="12" cy="12" r="11" fill="#c6c6c6" stroke="#555"/><circle cx="12" cy="12" r="8.500" fill="#eef4fc" stroke="#888"/><path d="M12 6v6h6" fill="none" stroke="#111" stroke-width="1.800"/></symbol>
<symbol id="r9" viewBox="0 0 24 24"><defs><linearGradient id="rb" x1="0" y1="0" x2="0" y2="1"><stop offset="0" stop-color="#e82020"/><stop offset=".3" stop-color="#f4e020"/><stop offset=".55" stop-color="#20d040"/><stop offset=".75" stop-color="#20c0e0"/><stop offset="1" stop-color="#1020c8"/></linearGradient></defs><rect x="2" y="0" width="8" height="24" fill="url(#rb)"/><path d="M12 5l10 14" stroke="#222" stroke-width="3"/><circle cx="11" cy="3" r="3" fill="#fff"/></symbol>
<symbol id="r10" viewBox="0 0 24 24"><path d="M4 3l4 0 2 17H1z" fill="#3a7ad8"/><path d="M10 4h13l-7 4 5 1-10 3z" fill="#5a8ae0"/><path d="M1 21h9" stroke="#e8c820" stroke-width="2"/><path d="M13 5l9 14" stroke="#222" stroke-width="3"/><circle cx="11" cy="4" r="3" fill="#fff"/></symbol>
<symbol id="r11" viewBox="0 0 24 24"><path d="M6 4h12l4 2-6 2-7-1z" fill="#666"/><path d="M15 7l-6 10" stroke="#777" stroke-width="3"/><path d="M3 18l4-3 7 4-3 3z" fill="#e08020"/><path d="M2 13l5 0 2 4-3 3z" fill="#999"/><path d="M10 17l8 4" stroke="#888" stroke-width="2"/></symbol>
<symbol id="gear" viewBox="0 0 20 20"><circle cx="10" cy="10" r="6" fill="none" stroke="#222" stroke-width="1.600"/><circle cx="10" cy="10" r="2.600" fill="none" stroke="#222" stroke-width=".8"/><path d="M10 2.500v2M10 15.500v2M2.500 10h2M15.500 10h2M4.700 4.700l1.400 1.400M13.900 13.900l1.400 1.400M4.700 15.300l1.400-1.400M13.900 6.100l1.400-1.400" stroke="#222" stroke-width="1.800"/></symbol>
</defs>
</svg>

<header class="titlebar">
  <span class="nx">NX</span><span class="qsep s1"></span>
  <svg class="q save" viewBox="0 0 20 20"><rect x="2" y="2" width="16" height="16" fill="#2a4a80" stroke="#16305c"/><rect x="5" y="2.500" width="10" height="7" fill="#d8e0ee"/><rect x="6" y="12" width="8" height="6" fill="#111"/></svg><span class="qsep s2"></span>
  <svg class="q undo"><use href="#undo"/></svg><i class="dn gray u-dn"></i><svg class="q redo"><use href="#redo"/></svg><span class="qsep s3"></span>
  <svg class="q cut" viewBox="0 0 20 20"><path d="M14 2L7 13M6 2l8 11" stroke="#bdbdbd" stroke-width="1.500"/><circle cx="5" cy="16" r="3" fill="none" stroke="#bdbdbd" stroke-width="1.500"/><circle cx="15" cy="16" r="3" fill="none" stroke="#bdbdbd" stroke-width="1.500"/></svg>
  <svg class="q copy" viewBox="0 0 20 20"><path d="M3 2h8v12H3zM9 6h8v12H9z" fill="#eee" stroke="#c2c2c2"/></svg>
  <svg class="q paste" viewBox="0 0 20 20"><rect x="3" y="3" width="11" height="15" fill="#e9e9e9" stroke="#c2c2c2"/><rect x="6" y="1" width="5" height="4" fill="#ccc"/><rect x="9" y="8" width="8" height="11" fill="#f6f6f6" stroke="#c2c2c2"/></svg><span class="qsep s4"></span>
  <span class="blackbox"></span><i class="dn b-dn"></i><span class="qsep s5"></span>
  <svg class="q brush" viewBox="0 0 20 20"><path d="M18 3l-6 4 2 3 6-5z" fill="#2a4a90"/><path d="M12 7l2 4-5 6-7-3 6-6z" fill="#d9b060" stroke="#765"/></svg><span class="qsep s6"></span>
  <svg class="q sw" viewBox="0 0 20 20"><rect x="2" y="2" width="10" height="8" fill="#fff" stroke="#777"/><rect x="8" y="5" width="10" height="8" fill="#fff" stroke="#777"/><rect x="6" y="9" width="8" height="9" fill="#fff" stroke="#1a30d0" stroke-width="1.500"/></svg><span class="qt t1">切换窗口</span>
  <svg class="q win" viewBox="0 0 20 20"><rect x="2" y="1.500" width="16" height="17" fill="#dfe9f8" stroke="#1a30d0" stroke-width="1.600"/><path d="M3 3h14v4H3z" fill="#1a30d0"/></svg><span class="qt t2">窗口</span><i class="dn w-dn"></i><span class="cust"></span>
  <span class="apptitle">NX 12 - 建模</span>
  <span class="siemens">SIEMENS</span>
  <svg class="wb mini" viewBox="0 0 20 20"><path d="M6 15h9" stroke="#333" stroke-width="2"/></svg>
  <svg class="wb rest" viewBox="0 0 20 20"><path d="M4 7h9v9H4zM7 7V4h9v9h-3" fill="none" stroke="#333" stroke-width="1.500"/></svg>
  <svg class="wb clos" viewBox="0 0 20 20"><path d="M4 3l12 13M16 3L4 16" stroke="#333" stroke-width="1.700"/></svg>
</header>

<nav class="menutabs">
  <span class="file">文件(F)</span>
  <span class="mt on">主页</span><span class="mt">装配</span><span class="mt">曲线</span><span class="mt">曲面</span><span class="mt">分析</span><span class="mt">视图</span><span class="mt">渲染</span><span class="mt">工具</span><span class="mt">应用模块</span><span class="mt">燕秀UG工具</span><span class="mt">燕秀UG模具6.2</span><span class="mt mt-last">注塑模向导</span>
  <span class="search"><span>查找命令</span><svg class="mag" viewBox="0 0 20 20"><circle cx="12" cy="7" r="5.500" fill="#fff" stroke="#555" stroke-width="1.300"/><path d="M8 11l-6 7" stroke="#555" stroke-width="2.200"/></svg></span>
  <svg class="mr m-full" viewBox="0 0 20 20"><path d="M2 5V2h3M15 2h3v3M18 15v3h-3M5 18H2v-3" fill="none" stroke="#555"/><rect x="5" y="4" width="10" height="12" fill="#f4f8ff" stroke="#333"/><rect x="5" y="4" width="10" height="3" fill="#234"/><rect x="7" y="8" width="6" height="6" fill="#2f62c0"/></svg>
  <svg class="mr m-up" viewBox="0 0 20 20"><path d="M4 12l6-6 6 6-2 2-4-4-4 4z" fill="none" stroke="#222" stroke-width="1.200"/></svg>
  <span class="help">?</span>
</nav>

<section class="ribbon">
  <div class="grp w-sk">
    <div class="body pl5">
      <div class="big w48"><svg class="bi"><use href="#sk"/></svg><span class="bl">草图</span></div>
      <div class="gallery">
        <svg class="gi"><use href="#spl"/></svg><svg class="gi"><use href="#rct"/></svg><svg class="gi"><use href="#lin"/></svg>
        <svg class="gi"><use href="#arc"/></svg><svg class="gi"><use href="#cir"/></svg><svg class="gi"><use href="#crs"/></svg>
      </div>
      <div class="gscroll"><i class="up"></i><i class="dn"></i><i class="dnbar"></i></div>
    </div>
    <div class="foot"><span>直接草图</span><i class="dn"></i></div>
  </div>
  <div class="grp w-fe">
    <div class="body pl10">
      <div class="big w48"><svg class="bi"><use href="#plane"/></svg><span class="bl">基准平面</span><i class="dn"></i></div>
      <div class="big w44"><svg class="bi"><use href="#extr"/></svg><span class="bl">拉伸</span><i class="dn"></i></div>
      <div class="big w32"><svg class="bi"><use href="#hole"/></svg><span class="bl">孔</span></div>
      <div class="col ml10 c-67">
        <div class="row"><svg class="si"><use href="#pat"/></svg>阵列特征</div>
        <div class="row"><svg class="si"><use href="#unite"/></svg>合并<i class="dn ml10"></i></div>
        <div class="row"><svg class="si"><use href="#shell"/></svg>抽壳</div>
      </div>
      <div class="big w46"><svg class="bi"><use href="#blend"/></svg><span class="bl">边倒圆</span><i class="dn"></i></div>
      <div class="col c-66">
        <div class="row"><svg class="si"><use href="#chamf"/></svg>倒斜角</div>
        <div class="row"><svg class="si"><use href="#trim"/></svg>修剪体</div>
        <div class="row"><svg class="si"><use href="#draft"/></svg>拔模</div>
      </div>
      <div class="morebtn"><span class="morebox"><svg class="si"><use href="#more"/></svg></span><span class="bl">更多</span><i class="dn"></i></div>
    </div>
    <div class="foot"><span>特征</span><i class="dn"></i></div>
  </div>
  <div class="grp w-sy">
    <div class="body pl7">
      <div class="big w44"><svg class="bi"><use href="#move"/></svg><span class="bl">移动面</span></div>
      <div class="col c-88">
        <div class="row gap7"><svg class="si"><use href="#fpull"/></svg>拉出面</div>
        <div class="row gap7"><svg class="si"><use href="#foff"/></svg>偏置区域</div>
        <div class="row gap7"><svg class="si"><use href="#fres"/></svg>调整面大小</div>
      </div>
      <div class="col c-60">
        <div class="row"><svg class="si"><use href="#frep"/></svg>替换面</div>
        <div class="row"><svg class="si"><use href="#fdel"/></svg>删除面</div>
      </div>
      <div class="morebtn ml7"><span class="morebox"><svg class="si"><use href="#rec"/></svg></span><span class="bl">更多</span><i class="dn"></i></div>
    </div>
    <div class="foot"><span>同步建模</span><i class="dn"></i></div>
  </div>
  <div class="grp w-st">
    <div class="tools">
      <div class="trow"><svg class="ti"><use href="#t1"/></svg><svg class="ti"><use href="#t2"/></svg><svg class="ti"><use href="#t3"/></svg><b class="vs"></b><svg class="ti"><use href="#t4"/></svg></div>
      <div class="trow"><svg class="ti"><use href="#t5"/></svg><svg class="ti"><use href="#t6"/></svg><svg class="ti"><use href="#t7"/></svg><b class="vs"></b><svg class="ti"><use href="#t8"/></svg></div>
    </div>
    <div class="foot"><span>标准化工具 - G...</span><i class="dn"></i></div>
  </div>
  <div class="grp w-ge">
    <div class="tools">
      <div class="trow"><svg class="ti"><use href="#g1"/></svg><svg class="ti"><use href="#g2"/></svg></div>
      <div class="trow"><svg class="ti"><use href="#g3"/></svg></div>
    </div>
    <div class="foot"><span>齿轮...</span><i class="dn"></i></div>
  </div>
  <div class="grp w-sp">
    <div class="tools">
      <div class="trow"><svg class="ti"><use href="#sp1"/></svg><svg class="ti"><use href="#sp2"/></svg></div>
      <div class="trow"><svg class="ti"><use href="#sp3"/></svg><svg class="ti"><use href="#sp4"/></svg></div>
    </div>
    <div class="foot"><span>弹簧...</span><i class="dn"></i></div>
  </div>
  <div class="grp w-ma">
    <div class="tools">
      <div class="trow"><svg class="ti"><use href="#m1"/></svg><svg class="ti"><use href="#m2"/></svg></div>
      <div class="trow"><svg class="ti"><use href="#m3"/></svg><svg class="ti"><use href="#m4"/></svg></div>
    </div>
    <div class="foot"><span>加工...</span><i class="dn"></i></div>
  </div>
  <div class="grp w-mo">
    <div class="tools">
      <div class="trow"><svg class="ti"><use href="#b1"/></svg><svg class="ti"><use href="#b2"/></svg><svg class="ti"><use href="#b3"/></svg><svg class="ti"><use href="#b4"/></svg></div>
      <div class="trow"><svg class="ti"><use href="#b5"/></svg><svg class="ti"><use href="#b6"/></svg><svg class="ti"><use href="#hs"/></svg></div>
    </div>
    <div class="foot"><span>建模工具 - G...</span><i class="dn"></i></div>
  </div>
  <div class="grp w-qu">
    <div class="tools">
      <div class="trow"><svg class="ti"><use href="#cubes"/></svg></div>
      <div class="trow"><svg class="ti"><use href="#cubes"/></svg></div>
    </div>
    <div class="foot"><span>?..</span><i class="dn"></i></div>
  </div>
  <div class="grp w-dm">
    <div class="tools">
      <div class="trow"><svg class="ti"><use href="#d1"/></svg><b class="vs"></b><svg class="ti"><use href="#x1"/></svg><svg class="ti"><use href="#tol"/></svg><svg class="ti"><use href="#tol"/></svg><svg class="ti"><use href="#tol2"/></svg><svg class="ti"><use href="#tol2"/></svg><svg class="ti"><use href="#x2"/></svg><svg class="ti"><use href="#x3"/></svg><svg class="ti"><use href="#hs"/></svg><svg class="ti"><use href="#hb"/></svg><svg class="ti"><use href="#hb"/></svg><svg class="ti"><use href="#hb"/></svg></div>
      <div class="trow"><svg class="ti"><use href="#d2"/></svg><svg class="ti"><use href="#d3"/></svg><b class="vs"></b><svg class="ti"><use href="#d4"/></svg><svg class="ti"><use href="#d4"/></svg><svg class="ti"><use href="#ret"/></svg></div>
    </div>
    <div class="foot"><span>尺寸快速格式化工具 - GC工具箱</span><i class="dn"></i></div>
  </div>
  <div class="grp w-su">
    <div class="body"><div class="big wfull"><svg class="bi"><use href="#surf"/></svg><span class="bl">曲面</span><i class="dn"></i></div></div>
  </div>
  <div class="grp w-as">
    <div class="body">
      <div class="big w64"><svg class="bi"><use href="#proc"/></svg><span class="bl dim">处理装配</span></div>
      <div class="big w30"><svg class="bi"><use href="#add"/></svg><span class="bl">添加</span><i class="dn"></i></div>
      <div class="col ml4 c-66">
        <div class="row"><svg class="si"><use href="#asm1"/></svg>装配约束</div>
        <div class="row"><svg class="si"><use href="#asm2"/></svg>移动组件</div>
        <div class="row"><svg class="si"><use href="#asm3"/></svg>阵列组件</div>
      </div>
    </div>
    <div class="foot"><span>装配</span><i class="dn"></i></div>
  </div>
  <div class="ribbon-end"><i class="dn"></i></div>
</section>

<section class="selbar">
  <svg class="mi" viewBox="0 0 20 20"><path d="M2 3h14M2 7h14M4 11h10M4 15h9" stroke="#41708a" stroke-width="1.500"/><path d="M11 8l7 5-3 1 2 4-2 1-2-4-2 2z" fill="#777" stroke="#333" stroke-width=".6"/></svg>
  <span class="menu-l">菜单(<u>M</u>)</span><i class="dn"></i><b class="sbsep"></b>
  <span class="sel s-a">无选择过滤器<i class="dn big-dn"></i></span>
  <span class="sel s-b">整个装配<i class="dn big-dn"></i></span>
  <span class="tb n"><svg><use href="#f1"/></svg></span><span class="tb n"><svg><use href="#f2"/></svg></span><span class="tb n"><svg><use href="#f3"/></svg></span><span class="ar"><i class="dn"></i></span>
  <span class="tb"><svg><use href="#f4"/></svg></span><span class="tb"><svg><use href="#f5"/></svg></span><span class="tb"><svg><use href="#f6"/></svg></span><span class="tb"><svg><use href="#f7"/></svg></span><span class="ar"><i class="dn"></i></span>
  <span class="tb"><svg><use href="#f8"/></svg></span><span class="tb"><svg><use href="#f9"/></svg></span><span class="tb act"><svg><use href="#f10"/></svg></span><span class="tb act"><svg><use href="#f11"/></svg></span><span class="tb act"><svg><use href="#f12"/></svg></span><span class="tb"><svg><use href="#f13"/></svg></span><span class="tb act"><svg><use href="#f14"/></svg></span><span class="tb act"><svg><use href="#f15"/></svg></span><span class="tb"><svg><use href="#f16"/></svg></span><span class="tb act"><svg><use href="#f17"/></svg></span><span class="tb"><svg><use href="#f18"/></svg></span><span class="tb act"><svg><use href="#f19"/></svg></span><span class="tb act"><svg><use href="#f12"/></svg></span><span class="tb"><svg><use href="#f20"/></svg></span><span class="tb"><svg><use href="#f21"/></svg></span><span class="tb"><svg><use href="#f22"/></svg></span><b class="tsep"></b>
  <span class="tb"><svg><use href="#v1"/></svg></span><span class="tb"><svg><use href="#v2"/></svg></span><span class="tb"><svg><use href="#v3"/></svg></span><span class="tb"><svg><use href="#v4"/></svg></span><span class="tb"><svg><use href="#v5"/></svg></span><span class="tb"><svg><use href="#v6"/></svg></span><span class="ar"><i class="dn"></i></span>
  <span class="tb"><svg><use href="#v7"/></svg></span><span class="ar"><i class="dn"></i></span><span class="tb"><svg><use href="#v8"/></svg></span><span class="ar"><i class="dn"></i></span><span class="tb"><svg><use href="#v9"/></svg></span><span class="ar"><i class="dn"></i></span><b class="tsep2"></b>
  <i class="dn selbar-end"></i>
</section>

<main class="work">
  <aside class="rail">
    <svg class="gearic"><use href="#gear"/></svg>
    <div class="ri"><svg><use href="#r1"/></svg></div>
    <div class="ri"><svg><use href="#r2"/></svg></div>
    <div class="ri on"><svg><use href="#r3"/></svg></div>
    <div class="ri"><svg><use href="#r4"/></svg></div>
    <div class="ri"><svg><use href="#r5"/></svg></div>
    <div class="ri tall t-first"><svg><use href="#r6"/></svg></div>
    <div class="ri tall"><svg><use href="#r7"/></svg></div>
    <div class="ri tall"><svg><use href="#r8"/></svg></div>
    <div class="ri t-after"><svg><use href="#r9"/></svg></div>
    <div class="ri"><svg><use href="#r10"/></svg></div>
    <div class="ri"><svg><use href="#r11"/></svg></div>
  </aside>
  <aside class="navpanel">
    <div class="navhead"><span class="pin">吕</span><span class="wnd"></span></div>
    <div class="navbox">
      <div class="navname">名称</div>
      <div class="navcols">
        <div class="navrows"><span class="minus"></span></div>
        <div class="navscroll"><i class="chev up-c"></i><b class="thumb"></b><i class="chev dn-c"></i></div>
      </div>
      <div class="navhs"><i class="chev lf"></i><i class="chev rt"></i></div>
    </div>
    <div class="navgrip"></div>
    <div class="acc">相关</div>
    <div class="acc">细节</div>
    <div class="acc">预览</div>
    <div class="navfoot"><i class="chev lf"></i><i class="chev rt"></i></div>
  </aside>
  <div class="stage">
    <div class="doctabs"><span class="doctab"><svg class="part" viewBox="0 0 20 20"><path d="M3 5l8-3v10l6-2v5l-7 3-7-3z" fill="#2c78d8" stroke="#dff"/></svg>盖子.prt<svg class="dtic" viewBox="0 0 20 20"><path d="M4 2h8l4 4v12H4z" fill="none" stroke="#fff" stroke-width="2"/><path d="M10 10l7-7" stroke="#fff" stroke-width="2"/></svg><span class="dtx">✕</span></span></div>
    <div class="viewport">
<svg class="scene" viewBox="85 203 1835 814" width="1835" height="814">
<defs>
<linearGradient id="gL" x1="0" x2="1" y1=".5" y2=".5"><stop offset="0" stop-color="#ff9c00"/><stop offset=".5" stop-color="#ffae08"/><stop offset="1" stop-color="#ffd20a"/></linearGradient>
<linearGradient id="gR" x1="0" x2="1" y1=".5" y2=".5"><stop offset="0" stop-color="#ffd20a"/><stop offset=".3" stop-color="#ffe410"/><stop offset=".7" stop-color="#ffb000"/><stop offset="1" stop-color="#e88e00"/></linearGradient>
<linearGradient id="gF" x1=".5" x2=".5" y1="0" y2="1"><stop offset="0" stop-color="#ffcc0a"/><stop offset=".55" stop-color="#ffa200"/><stop offset="1" stop-color="#f09a00"/></linearGradient>
<linearGradient id="gBL" x1="0" x2="1" y1=".3" y2=".5"><stop offset="0" stop-color="#ffa800"/><stop offset="1" stop-color="#8a5400"/></linearGradient>
<linearGradient id="gBR" x1="0" x2="1" y1=".5" y2=".3"><stop offset="0" stop-color="#7a4800"/><stop offset="1" stop-color="#f09a00"/></linearGradient>
<linearGradient id="gH" x1="0" x2="1" y1=".5" y2=".5"><stop offset="0" stop-color="#dc8a00"/><stop offset=".3" stop-color="#7e4c00"/><stop offset=".5" stop-color="#9e6200"/><stop offset=".85" stop-color="#663c00"/><stop offset="1" stop-color="#7c4a00"/></linearGradient>
<linearGradient id="gC" x1="0" x2="1" y1=".5" y2=".5"><stop offset="0" stop-color="#8c5600"/><stop offset=".5" stop-color="#6a3f00"/><stop offset=".8" stop-color="#b87000"/><stop offset="1" stop-color="#f09a00"/></linearGradient>
<radialGradient id="gS"><stop offset="0" stop-color="#663c00"/><stop offset=".6" stop-color="#c07a00"/><stop offset="1" stop-color="#ffd83a"/></radialGradient>
<clipPath id="cBig"><ellipse rx="73" ry="63"/></clipPath>
<clipPath id="cCen"><ellipse cy="1" rx="73" ry="63"/></clipPath>
<g id="bigH">
<ellipse cy="5" rx="81" ry="70" fill="url(#gC)"/>
<ellipse rx="81" ry="69.500" fill="#ffcf0a" stroke="#5b4a18" stroke-width=".7"/>
<g clip-path="url(#cBig)"><ellipse rx="73" ry="63" fill="url(#gH)"/>
<ellipse cx="24" cy="64" rx="70" ry="63" fill="#ffcf0a" stroke="#5b4a18" stroke-width=".5"/>
<ellipse cx="23" cy="68" rx="62" ry="55" fill="#24262b"/></g>
<ellipse rx="73" ry="63" fill="none" stroke="#5b4a18" stroke-width=".6"/>
</g>
<g id="screw"><ellipse rx="12.500" ry="11" fill="#ffcf0a" stroke="#4a3c10" stroke-width=".7"/><ellipse cy="1" rx="10.500" ry="9" fill="url(#gS)"/><path d="M-5 5c3-3 7-3 10 0M-3 7c2-2 4-2 6 0" fill="none" stroke="#ffe070" stroke-width=".9"/></g>
</defs>
<path d="M648 413L1368 411Q1377 412 1384 437L1401 497 1401 503 1372 773Q1368 800 1336 803L651 803Q630 800 622 787L606 728 603 722 635 433Q638 416 648 413z" fill="#e08c00"/>
<path d="M635 747L1319 745 1336 803 651 803z" fill="#663c00" stroke="#4a3a20" stroke-width=".7"/>
<path d="M608 728L635 747 651 803Q630 800 622 787z" fill="url(#gBL)" stroke="#6a5020" stroke-width=".5"/>
<path d="M1340 728L1355 717 1372 773Q1368 800 1336 803L1319 745z" fill="url(#gBR)" stroke="#6a5020" stroke-width=".5"/>
<path d="M1384 437L1401 497 1401 503 1372 773 1355 717z" fill="#dd8a00" stroke="#a06a10" stroke-width=".5"/>
<path d="M616 723L1335 722 1340 728 1319 745 635 747 608 728z" fill="url(#gF)"/>
<path d="M1368 421L1372 412Q1378 416 1384 437L1355 717 1340 728 1335 722z" fill="url(#gR)"/>
<path d="M648 413L648 422 616 723 608 728 603 722 635 433Q638 416 648 413z" fill="url(#gL)"/>
<path d="M648 413L1368 411 1372 412 1368 421 648 422z" fill="#ffbe08"/>
<path d="M648 422L1368 421 1335 722 616 723z" fill="#ffcf0a" stroke="#5b4a18" stroke-width=".7"/>
<g fill="#ffcf0a" stroke="#5b4a18" stroke-width=".8">
<path d="M767 429a5 5 0 0 1 10 0l-1 21h30a4 4 0 0 1 4 4v4a4 4 0 0 1-4 4h-30l-1 23a4 4 0 0 1-9 0l1-23h-31a4 4 0 0 1-4-4v-4a4 4 0 0 1 4-4h31z"/>
<path d="M743 658a5 5 0 0 1 10 0l-1 22h30a4 4 0 0 1 4 4v4a4 4 0 0 1-4 4h-30l-1 22a4 4 0 0 1-9 0l1-22h-31a4 4 0 0 1-4-4v-4a4 4 0 0 1 4-4h31z"/>
<rect x="1187" y="450" width="75" height="12" rx="3"/>
<rect x="1162" y="680" width="75" height="12" rx="3"/>
</g>
<path d="M734 462h32M778 462h28M712 692h31M755 692h27M1188 461.500h73M1163 691.500h73" stroke="#3a2c08" stroke-width="1.200"/>
<use href="#bigH" transform="translate(759 567) skewX(-7)"/>
<use href="#bigH" transform="translate(1211 567) skewX(-7)"/>
<g transform="translate(987 555) skewX(-5.500)">
<ellipse cx="4" cy="18" rx="85" ry="72" fill="url(#gC)"/>
<ellipse rx="85" ry="72" fill="#ffcf0a" stroke="#5b4a18" stroke-width=".7"/>
<g clip-path="url(#cCen)">
<ellipse cy="1" rx="73" ry="63" fill="url(#gH)"/>
<ellipse cx="0" cy="8" rx="71" ry="57" fill="none" stroke="#3a3a50" stroke-width=".9"/>
<ellipse cx="0" cy="13" rx="71" ry="55" fill="#ffcf0a"/>
<ellipse cx="7.700" cy="18" rx="54" ry="45" fill="url(#gH)" stroke="#5b4a18" stroke-width=".5"/>
<ellipse cx="10.500" cy="26" rx="44" ry="38" fill="#24262b"/>
</g>
<ellipse cy="1" rx="73" ry="63" fill="none" stroke="#3a3a50" stroke-width=".6"/>
</g>
<path d="M1033 555L1040 551Q1051 575 1038 598L1034 596Q1044 575 1033 555z" fill="#ffcf0a"/>
<path d="M955 558L962 565Q946 585 954 606L958 612 949 604Q935 580 955 558z" fill="#ffcf0a"/>
<path d="M958 568Q949 585 957 606L954 606Q946 585 958 568z" fill="#e08c00"/>
<path d="M1000 544L1012 543 1017 566 1006 567z" fill="#8c5a00"/><path d="M1012 543L1017 542 1017 558 1015 557z" fill="#f09a00"/>
<use href="#screw" x="1003" y="471"/><use href="#screw" x="920" y="658"/><use href="#screw" x="1061" y="658"/>
<g>
<path d="M125 951l20 0 4 3 6 33-2 2h-30l-3-3-3-24z" fill="#8f8f8f" stroke="#777"/>
<path d="M121 962l32 1M129 951l-8 11 4 26" fill="none" stroke="#aaa" stroke-width=".8"/>
<path d="M149 950L107 950" stroke="#3c9a3c" stroke-width="2.500"/><path d="M106 950l12-3v6z" fill="#3c9a3c"/>
<text x="101" y="955" class="axis ax-y">Y</text>
<path d="M150 952l7 25" stroke="#1a40c8" stroke-width="1.500"/><text x="157" y="981" class="axis ax-z">Z</text>
<path d="M149 952L145 985" stroke="#d8354a" stroke-width="2.500"/><path d="M144 988l-3-11h8z" fill="#d8354a"/>
<text x="145" y="997" class="axis ax-x">X</text>
<circle cx="149" cy="950" r="4" fill="#ddd"/>
</g>
</svg>
      <div class="gauge"><b></b></div>
      <div class="ime">
        <span class="ime-s">S</span><span class="ime-t zh">中</span><span class="ime-t pn">°,</span>
        <svg class="ime-i" viewBox="0 0 20 20"><circle cx="10" cy="10" r="8" fill="none" stroke="#1c75c8" stroke-width="1.700"/><path d="M6 11c1 4 7 4 8 0" fill="none" stroke="#1c75c8" stroke-width="1.500"/><circle cx="7" cy="7.500" r="1.200" fill="#1c75c8"/><circle cx="13" cy="7.500" r="1.200" fill="#1c75c8"/></svg>
        <svg class="ime-i" viewBox="0 0 20 20"><rect x="7" y="1" width="6" height="11" rx="3" fill="#1c75c8"/><path d="M4 8c0 8 12 8 12 0M10 14v4M6 18.500h8" fill="none" stroke="#1c75c8" stroke-width="1.500"/></svg>
        <svg class="ime-i" viewBox="0 0 20 20"><rect x="1" y="4" width="18" height="12" rx="2" fill="#1c75c8"/><path d="M4 7.500h12M4 10h12M6 13h8" stroke="#fff" stroke-width="1.300" stroke-dasharray="1.500 1"/></svg>
        <svg class="ime-i" viewBox="0 0 20 20"><circle cx="9" cy="5" r="4" fill="#1c75c8"/><path d="M3 16c0-5 3-6 6-6s6 1 6 6z" fill="#1c75c8"/><rect x="7" y="12" width="12" height="7" fill="#fff" stroke="#1c75c8"/><text x="13" y="18" class="ime-n">32</text></svg>
        <svg class="ime-i" viewBox="0 0 20 20"><path d="M6 2l4 1 4-1 5 4-3 3-1-1v10H5V8L4 9 1 6z" fill="#1c75c8"/></svg>
        <svg class="ime-i" viewBox="0 0 20 20"><rect x="2" y="2" width="7" height="7" fill="#1c75c8"/><rect x="11.500" y="2.500" width="6" height="6" fill="none" stroke="#1c75c8"/><rect x="2" y="11" width="7" height="7" fill="#1c75c8"/><rect x="11" y="11" width="7" height="7" fill="#1c75c8"/></svg>
      </div>
    </div>
  </div>
</main>

<footer class="status">
  <span class="sticons">
    <svg viewBox="0 0 20 20"><rect x="2" y="1" width="16" height="18" fill="#ddd"/><path d="M5 16L15 4M8 16l6-10" stroke="#999"/></svg>
    <svg viewBox="0 0 20 20"><path d="M3 4V1h3M14 1h3v3M17 16v3h-3M6 19H3v-3" fill="none" stroke="#777"/><rect x="6" y="3" width="8" height="14" fill="#eef" stroke="#666"/><rect x="7" y="8" width="6" height="7" fill="#3f72c8"/></svg>
  </span>
</footer>

<footer class="taskbar">
  <span class="tk n3"><svg viewBox="0 0 24 24"><path d="M3 5l8-1v7H3zM12 4l9-1v8h-9zM3 12h8v7l-8-1zM12 12h9v8l-9-1z" fill="#fff"/></svg></span>
  <span class="tk n3"><svg viewBox="0 0 24 24"><circle cx="12" cy="12" r="7.500" fill="none" stroke="#fff" stroke-width="2.200"/></svg></span>
  <span class="tk n3"><svg viewBox="0 0 24 24"><path d="M3 3h12M3 21h12M4 9h11v7H4zM19 3v6M19 15v6" fill="none" stroke="#fff" stroke-width="1.400"/><rect x="18" y="10" width="3" height="3" fill="#fff"/></svg></span>
  <span class="tk first"><svg viewBox="0 0 24 24"><path d="M2 14C2 6 8 1 14 1c6 0 9 5 9 11H9c1 6 9 6 13 3v6c-7 3-14 1-16-5 0-3 1-5 3-7-3 1-5 3-7 5z" fill="#0a78d6"/></svg></span>
  <span class="tk"><svg viewBox="0 0 24 24"><path d="M2 3h7l2 2h11v17H2z" fill="#f8d775"/><path d="M2 8h20v14H2z" fill="#fbe29b"/><path d="M8 14h8v8H8z" fill="#2c9fe0"/><rect x="10" y="18" width="4" height="4" fill="#f8d775"/></svg></span>
  <span class="tk"><svg viewBox="0 0 24 24"><rect x="2" y="7" width="20" height="16" fill="#fff"/><path d="M8 7c0-6 8-6 8 0" fill="none" stroke="#fff" stroke-width="1.500"/><rect x="7" y="10" width="4" height="4" fill="#f25022"/><rect x="12" y="10" width="4" height="4" fill="#7fba00"/><rect x="7" y="15" width="4" height="4" fill="#00a4ef"/><rect x="12" y="15" width="4" height="4" fill="#ffb900"/></svg></span>
  <span class="tk"><svg viewBox="0 0 24 24"><circle cx="12" cy="11" r="9" fill="none" stroke="#1a8fe8" stroke-width="4"/><path d="M7 21c2-5 6-6 8-3 3-1 6 1 6 3z" fill="#fff"/></svg></span>
  <span class="tk"><svg viewBox="0 0 24 24"><rect x="1" y="1" width="22" height="22" rx="4" fill="#e2001a"/><path d="M13 5c-5 1-7 5-6 8s6 5 9 2 1-8-2-7-3 5-1 5 2-2 1-3" fill="none" stroke="#fff" stroke-width="2"/></svg></span>
  <span class="tk"><svg viewBox="0 0 24 24"><circle cx="12" cy="12" r="11" fill="#0e3d68"/><path d="M1 13l7 4a4 4 0 1 0 3-5l4-5a4 4 0 1 1 1 7l-6 3" fill="#fff" opacity=".95"/><circle cx="16" cy="9" r="2" fill="#0e3d68"/></svg></span>
  <span class="tk"><svg viewBox="0 0 24 24"><circle cx="12" cy="12" r="11" fill="#2c2b4e"/><path d="M7 8a7 7 0 1 0 10 0" fill="none" stroke="#2fc1c4" stroke-width="2"/><path d="M12 4v6" stroke="#2fc1c4" stroke-width="2"/></svg></span>
  <span class="tk"><svg viewBox="0 0 24 24"><ellipse cx="12" cy="11" rx="7" ry="9" fill="#111" stroke="#333"/><ellipse cx="12" cy="15" rx="5" ry="6" fill="#fff"/><path d="M6 12h12v3H6z" fill="#d71518"/><path d="M9 8h6l-3 3z" fill="#f5b018"/><path d="M5 21h6v2H5zM13 21h6v2h-6z" fill="#f5b018"/></svg></span>
  <span class="tk"><svg viewBox="0 0 24 24"><path d="M1 3l13-3v24L1 21z" fill="#1e7145"/><rect x="14" y="4" width="9" height="16" fill="#fff"/><path d="M14 8h9M14 12h9M14 16h9M18 4v16" stroke="#1e7145"/><text x="7.500" y="16" class="tk-l">X</text></svg></span>
  <span class="tk"><svg viewBox="0 0 24 24"><path d="M1 3l13-3v24L1 21z" fill="#2b579a"/><rect x="14" y="4" width="9" height="16" fill="#fff"/><path d="M15 8h7M15 12h7M15 16h7" stroke="#2b579a"/><text x="7.500" y="16" class="tk-l">W</text></svg></span>
  <span class="tk"><svg viewBox="0 0 24 24"><path d="M1 3l13-3v24L1 21z" fill="#c8431d"/><rect x="14" y="4" width="9" height="16" fill="#fff"/><path d="M16 6a4 4 0 0 1 4 4h-4zM15 16h7" fill="#c8431d" stroke="#c8431d"/><text x="7.500" y="16" class="tk-l">P</text></svg></span>
  <span class="tk"><svg viewBox="0 0 24 24"><rect x="1" y="0" width="22" height="24" rx="3" fill="#fff"/><circle cx="9" cy="14" r="4.500" fill="none" stroke="#3ca8e8" stroke-width="2"/><circle cx="15" cy="14" r="4.500" fill="none" stroke="#4a80e0" stroke-width="2"/><circle cx="12" cy="8" r="4.500" fill="none" stroke="#48b8e8" stroke-width="2"/><path d="M7 22h4" stroke="#f06" stroke-width="1.500"/></svg></span>
  <span class="tk"><svg viewBox="0 0 24 24"><path d="M3 3a19 19 0 0 1 19 19M3 9a13 13 0 0 1 13 13M3 15a7 7 0 0 1 7 7" fill="none" stroke="#8ab0e8" stroke-width="3"/><circle cx="5" cy="20" r="3" fill="#7aa4e0"/></svg></span>
  <span class="tk"><svg viewBox="0 0 24 24"><ellipse cx="9" cy="10" rx="8" ry="7" fill="#7bd32e"/><ellipse cx="17" cy="16" rx="6.500" ry="5.500" fill="#f4f4f4"/><circle cx="6" cy="8" r="1.300" fill="#234"/><circle cx="12" cy="8" r="1.300" fill="#234"/></svg></span>
  <span class="tk"><svg viewBox="0 0 24 24"><path d="M5 1h7l1 2v19l-8 2z" fill="#f2cd6c"/><path d="M16 10l6 10a5 5 0 0 1-9 0z" fill="#2a7ee0"/></svg></span>
  <span class="tk active"><svg viewBox="0 0 24 24"><path d="M12 24C4 22 3 10 9 3l5 8 1-9c6 4 6 12 2 17-2-3-2-6-4-8-2 4-1 9-1 13z" fill="#1d6fd2"/><path d="M9 3l5 8 1-9-3-1z" fill="#e02028"/><path d="M2 18c4 5 12 6 18-2-4 7-12 8-18 4z" fill="#f0a818"/></svg></span>
  <span class="tk"><svg viewBox="0 0 24 24"><rect x="3" y="2" width="18" height="20" rx="1" fill="#222" stroke="#888"/><path d="M7 16c0-5 5-7 10-7M9 18c0-4 4-6 8-6M11 19c0-3 3-4 6-4" fill="none" stroke="#888"/><path d="M5 5h14" stroke="#888"/></svg></span>
  <span class="tk"><svg viewBox="0 0 24 24"><rect x="5" y="3" width="15" height="12" fill="#ddd" stroke="#888"/><path d="M8 12l2-5 2 3 2-5 2 7" fill="none" stroke="#2a8ae0"/><circle cx="11" cy="20" r="3.500" fill="#ccc" stroke="#777"/></svg></span>
  <span class="tk"><svg viewBox="0 0 24 24"><rect x="2" y="0" width="20" height="24" fill="#fbe6dc"/><text x="12" y="20" class="tk-a">A</text></svg></span>
  <span class="tk"><svg viewBox="0 0 24 24"><rect x="2" y="0" width="20" height="24" rx="2" fill="#e6ecf8"/><path d="M6 6c6 1 9 3 10 7l4-6-3 9c-1 3-3 5-5 6 1-4-1-10-6-16z" fill="#6a86e8"/></svg></span>
  <span class="tk"><svg viewBox="0 0 24 24"><rect x="4" y="0" width="16" height="24" fill="#fff"/><rect x="6" y="2" width="12" height="4" fill="#111"/><g fill="#111"><rect x="6" y="9" width="3" height="2"/><rect x="10.500" y="9" width="3" height="2"/><rect x="15" y="9" width="3" height="2"/><rect x="6" y="13" width="3" height="2"/><rect x="10.500" y="13" width="3" height="2"/><rect x="15" y="13" width="3" height="2"/><rect x="6" y="17" width="3" height="2"/><rect x="10.500" y="17" width="3" height="2"/><rect x="15" y="17" width="3" height="2"/></g></svg></span>
  <span class="tray">
    <svg class="tri w-caret" viewBox="0 0 20 20"><path d="M4 13l6-7 6 7" fill="none" stroke="#fff" stroke-width="1.300"/></svg>
    <svg class="tri" viewBox="0 0 20 20"><ellipse cx="10" cy="9" rx="5" ry="7" fill="#222"/><ellipse cx="10" cy="12" rx="4" ry="5" fill="#eee"/><path d="M5 10h10v2H5z" fill="#d71518"/><path d="M5 18h4v1H5zM11 18h4v1h-4z" fill="#f5b018"/></svg>
    <svg class="tri" viewBox="0 0 20 20"><circle cx="10" cy="10" r="9" fill="#7ab800"/><circle cx="10" cy="10" r="6" fill="#f5d020"/><path d="M10 6v8M6 10h8" stroke="#2a5a10" stroke-width="2"/></svg>
    <svg class="tri" viewBox="0 0 20 20"><rect x="6" y="5" width="12" height="10" fill="#2b6a96" stroke="#a8dcff"/><path d="M1 9h5M3 6v6" stroke="#a8dcff"/></svg>
    <svg class="tri" viewBox="0 0 20 20"><path d="M4 17a13 13 0 0 1 13-13M8 17a9 9 0 0 1 9-9M12 17a5 5 0 0 1 5-5" fill="none" stroke="#ccc"/><path d="M2 18h2v-3zM15 17h2v-3z" fill="#ccc"/></svg>
    <svg class="tri" viewBox="0 0 20 20"><path d="M2 7h3l5-4v14l-5-4H2z" fill="none" stroke="#eee"/><path d="M13 6c2 2 2 6 0 8M15.500 4c3 3 3 9 0 12" fill="none" stroke="#eee"/></svg>
    <span class="tri-zh">中</span>
    <span class="tri-s">S</span>
    <span class="clock"><span>15:19</span><span>2019/1/18</span></span>
    <svg class="tri notif" viewBox="0 0 20 20"><path d="M2 2h16v13h-6l-2 3-2-3H2z" fill="none" stroke="#fff"/></svg>
  </span>
</footer>

<div class="mark">
  <svg class="mark-logo" viewBox="0 0 72 73">
    <path d="M36 0L72 21V52L36 73 0 52V21z" fill="rgba(160,220,250,.55)"/>
    <path d="M48 7L72 21V52L36 73 28 68C50 62 62 40 48 7z" fill="rgba(23,133,198,.6)"/>
    <path d="M11 35L34 23 53 32M21 57L34 63 54 50" fill="none" stroke="rgba(20,25,30,.75)" stroke-width="4"/>
    <path d="M34 32L48 39V50L34 56z" fill="rgba(120,200,245,.7)"/>
    <path d="M34 32L21 39V50L34 56z" fill="rgba(190,230,250,.7)"/>
    <path d="M21 39L34 45 48 39M34 45V56" fill="none" stroke="#fff" stroke-width="1.200"/>
  </svg>
  <div class="mark-t"><span class="mark-a">3D世界网</span><span class="mark-b">WWW.3DSJW.COM</span></div>
</div>
</body>
</html>
```
FILE: styles.css
```css
* { box-sizing: border-box; }
html, body { margin: 0; padding: 0; }
body { position: relative; width: 1920px; height: 1080px; overflow: hidden; display: flex; flex-direction: column; background: #fff; color: #222; font: 11px/14px "Noto Sans CJK SC", "Noto Sans", sans-serif; }
.defs { position: absolute; }
i { font-style: normal; }
b { font-weight: 400; }

.titlebar { height: 26px; flex: none; display: flex; align-items: center; background: #fff; font-size: 11px; white-space: nowrap; }
.nx { width: 41px; padding-left: 3px; font: 700 24px/26px "Liberation Sans", sans-serif; color: #8a9bab; letter-spacing: -.5px; flex: none; }
.qsep { width: 1px; height: 18px; background: #ddd; flex: none; }
.q { width: 18px; height: 18px; flex: none; }
.save { margin-left: 9px; }
.s2 { margin-left: 5px; }
.undo { margin-left: 4px; }
.u-dn { margin-left: 6px; }
.redo { margin-left: 4px; }
.s3 { margin-left: 6px; }
.cut { margin-left: 4px; }
.copy { margin-left: 6px; }
.paste { margin-left: 5px; }
.s4 { margin-left: 5px; }
.blackbox { width: 16px; height: 16px; margin-left: 7px; background: #000; border: 1px solid #000; box-shadow: 0 0 0 1px #999; flex: none; }
.b-dn { margin-left: 6px; }
.s5 { margin-left: 5px; }
.brush { margin-left: 2px; }
.s6 { margin-left: 8px; }
.sw { margin-left: 5px; }
.qt { flex: none; }
.t1 { margin-left: 3px; width: 44px; }
.win { margin-left: 5px; }
.t2 { margin-left: 4px; width: 24px; }
.w-dn { margin-left: 1px; }
.cust { width: 6px; height: 5px; margin-left: 5px; border-top: 1px solid #222; border-bottom: 3px solid #222; flex: none; }
.apptitle { margin-left: 640px; width: 80px; font-size: 13px; flex: none; }
.siemens { margin-left: 625px; width: 60px; font: 700 13px/20px "Liberation Sans", sans-serif; color: #0a9a9a; letter-spacing: .4px; margin-top: 3px; flex: none; }
.wb { width: 16px; height: 16px; flex: none; }
.mini { margin-left: 24px; }
.rest { margin-left: 8px; }
.clos { margin-left: 8px; }

.dn { display: inline-block; width: 0; height: 0; border-left: 3px solid transparent; border-right: 3px solid transparent; border-top: 4px solid #222; flex: none; }
.dn.gray { border-top-color: #aaa; }

.menutabs { height: 28px; flex: none; display: flex; align-items: stretch; background: #dcdcdc; font-size: 13px; line-height: 28px; }
.file { width: 81px; margin-right: 2px; background: #5aa4ba; color: #fff; text-align: center; }
.mt { padding: 0 13px; white-space: nowrap; }
.mt.on { background: #fff; color: #00769a; margin-top: 1px; }
.mt-last { margin-left: 3px; }
.search { width: 125px; height: 20px; margin-top: 4px; margin-left: auto; border: 1px solid #a9a9a9; background: #fff; display: flex; align-items: center; justify-content: space-between; padding: 0 2px; font-size: 11px; line-height: 18px; color: #999; }
.mag { width: 16px; height: 16px; }
.mr { width: 18px; height: 18px; margin-top: 5px; flex: none; }
.m-full { margin-left: 10px; }
.m-up { margin-left: 9px; }
.help { width: 14px; height: 14px; margin: 7px 10px 0 10px; border-radius: 50%; background: #3a62c0; color: #fff; font: 700 11px/14px "Liberation Sans", sans-serif; text-align: center; }

.ribbon { height: 93px; flex: none; display: flex; padding-top: 5px; background: #fff; border-bottom: 1px solid #e0e0e0; }
.grp { height: 84px; display: flex; flex-direction: column; border-right: 1px solid #dedede; flex: none; }
.w-sk { width: 178px; }
.w-fe { width: 368px; }
.w-sy { width: 245px; }
.w-st { width: 104px; }
.w-ge { width: 52px; }
.w-sp { width: 58px; }
.w-ma { width: 52px; }
.w-mo { width: 98px; }
.w-qu { width: 29px; }
.w-dm { width: 288px; }
.w-su { width: 43px; }
.w-as { width: 181px; }
.ribbon-end { flex: 1; display: flex; justify-content: flex-end; align-items: flex-end; padding: 0 6px 5px 0; }
.body { height: 70px; flex: none; display: flex; align-items: flex-start; }
.pl5 { padding-left: 5px; }
.pl7 { padding-left: 7px; }
.pl10 { padding-left: 10px; }
.ml4 { margin-left: 4px; }
.ml7 { margin-left: 7px; }
.ml10 { margin-left: 10px; }
.foot { height: 14px; margin-top: 2px; flex: none; display: flex; align-items: center; padding-right: 8px; color: #0078a0; white-space: nowrap; }
.foot span { flex: 1; text-align: center; overflow: hidden; }
.foot .dn { margin-left: 3px; }
.tools { height: 70px; flex: none; padding: 1px 0 0 4px; }
.trow { height: 30px; display: flex; align-items: center; }
.ti { width: 20px; height: 20px; margin: 0 1.500px; flex: none; }
.vs { width: 1px; height: 20px; margin: 0 2px; background: #ddd; flex: none; }

.big { display: flex; flex-direction: column; align-items: center; flex: none; }
.w48 { width: 48px; }
.w44 { width: 44px; }
.w46 { width: 46px; }
.w32 { width: 32px; }
.w30 { width: 30px; margin-left: 0; }
.w64 { width: 66px; }
.wfull { width: 100%; }
.bi { width: 32px; height: 36px; margin-bottom: 1px; flex: none; }
.bl { height: 14px; white-space: nowrap; }
.bl.dim { color: #c2c2c2; }
.big > .dn, .morebtn > .dn { margin-top: 5px; }
.gallery { width: 98px; height: 66px; margin-left: 5px; border: 1px solid #ddd; display: grid; grid-template-columns: repeat(3, 1fr); grid-template-rows: 1fr 1fr; place-items: center; flex: none; }
.gi { width: 24px; height: 24px; }
.gscroll { width: 20px; height: 66px; display: flex; flex-direction: column; align-items: center; justify-content: space-around; padding: 4px 0; flex: none; }
.up { width: 0; height: 0; border-left: 3px solid transparent; border-right: 3px solid transparent; border-bottom: 4px solid #bbb; }
.dnbar { width: 7px; height: 6px; border-top: 1px solid #222; border-bottom: 4px solid #222; }
.col { display: flex; flex-direction: column; gap: 8px; flex: none; }
.c-67 { width: 70px; }
.c-66 { width: 66px; }
.c-88 { width: 88px; margin-left: -3px; }
.c-60 { width: 60px; }
.row { height: 14px; display: flex; align-items: center; gap: 3px; white-space: nowrap; }
.gap7 { gap: 7px; }
.si { width: 20px; height: 20px; flex: none; }
.morebtn { width: 38px; display: flex; flex-direction: column; align-items: center; flex: none; }
.morebox { width: 38px; height: 34px; margin-bottom: 3px; border: 1px solid #dcdcdc; border-radius: 3px; display: flex; align-items: center; justify-content: center; }

.selbar { height: 33px; flex: none; display: flex; align-items: center; padding: 1px 0 0 11px; border-bottom: 2px solid #a8a8a8; background: #fff; }
.mi { width: 16px; height: 16px; flex: none; }
.menu-l { width: 44px; margin-left: 4px; font-size: 12px; white-space: nowrap; }
.sbsep { width: 1px; height: 18px; margin: 0 11px 0 6px; background: #ddd; flex: none; }
.sel { height: 20px; margin-right: 10px; border: 1px solid #a5a5a5; display: flex; align-items: center; justify-content: space-between; padding: 0 5px 0 2px; line-height: 18px; flex: none; font-size: 11.500px; }
.s-a { width: 132px; }
.s-b { width: 140px; margin-right: 4px; }
.big-dn { border-left-width: 4px; border-right-width: 4px; border-top-width: 5px; }
.tb { width: 25px; height: 22px; display: flex; align-items: center; justify-content: center; flex: none; }
.tb svg { width: 18px; height: 18px; }
.tb.n { width: 24px; }
.tb.act { background: #c9e4ea; box-shadow: inset 0 0 0 1px #a9d4dd; margin: 0 1px; width: 23px; }
.ar { width: 12px; display: flex; justify-content: center; flex: none; }
.tsep { width: 1px; height: 18px; margin: 0 6px; background: #ddd; flex: none; }
.tsep2 { width: 1px; height: 18px; margin-left: 8px; background: #ddd; flex: none; }
.selbar-end { margin-left: auto; margin-right: 6px; }

.work { flex: 1; min-height: 0; display: flex; }
.rail { width: 32px; flex: none; background: #dcdcdc; border-right: 1px solid #a3a3a3; display: flex; flex-direction: column; align-items: center; }
.gearic { width: 18px; height: 18px; margin: 4px 0 20px; flex: none; }
.ri { width: 32px; height: 41px; display: flex; align-items: center; justify-content: center; flex: none; }
.ri svg { width: 24px; height: 24px; }
.ri.on { height: 46px; margin: 0 -1px -3px 1px; background: #fff; border: 1px solid #aaa; border-right: 0; border-radius: 2px 0 0 2px; position: relative; z-index: 1; }
.ri.tall { height: 54px; }
.t-first { margin-top: 8px; }
.t-after { margin-top: -4px; }
.navpanel { width: 52px; flex: none; background: #fff; border-right: 1px solid #a3a3a3; display: flex; flex-direction: column; align-items: stretch; padding-left: 6px; }
.navhead { height: 28px; flex: none; display: flex; align-items: center; gap: 5px; padding-left: 3px; font-size: 9px; }
.pin { width: 8px; line-height: 12px; }
.wnd { width: 11px; height: 10px; border: 1px solid #111; border-top-width: 2px; }
.navbox { width: 36px; height: 708px; flex: none; border: 1px solid #dcdcdc; border-width: 0 1px; background: #fff; display: flex; flex-direction: column; }
.navname { height: 22px; border-top: 2px solid #dcdcdc; padding: 1px 0 0 6px; margin-left: 1px; background: #f3f3f3; border-bottom: 1px solid #ddd; font-size: 12px; line-height: 19px; flex: none; white-space: nowrap; overflow: hidden; }
.navcols { flex: 1; display: flex; min-height: 0; }
.navrows { width: 16px; background: repeating-linear-gradient(#fff 0 19px, #ececec 19px 20px); padding: 6px 0 0 5px; flex: none; }
.minus { display: block; width: 8px; height: 8px; border: 1px solid #888; background: linear-gradient(#fff 3px, #222 3px 4px, #fff 4px); }
.navscroll { width: 16px; background: #f0f0f0; display: flex; flex-direction: column; align-items: center; flex: none; padding-top: 9px; }
.thumb { width: 15px; height: 287px; margin-top: 29px; background: #cbcbcb; flex: none; }
.chev { display: inline-block; width: 6px; height: 6px; border: solid #555; border-width: 2px 0 0 2px; flex: none; }
.up-c { transform: rotate(45deg); }
.dn-c { transform: rotate(225deg); margin-top: auto; margin-bottom: 5px; }
.lf { transform: rotate(-45deg); }
.rt { transform: rotate(135deg); }
.navhs { height: 18px; flex: none; background: #f0f0f0; display: flex; align-items: center; justify-content: space-around; padding: 0 6px; }
.navgrip { width: 36px; height: 5px; margin-top: 1px; background: #d8d8d8; border: 1px solid #aaa; flex: none; }
.acc { width: 36px; height: 24px; flex: none; border-bottom: 2px solid #d8d8d8; color: #0b79a8; font-size: 14px; line-height: 19px; text-align: right; padding-top: 3px; white-space: nowrap; }
.navfoot { width: 36px; height: 16px; margin-top: 3px; background: #eee; display: flex; align-items: center; justify-content: space-around; padding: 0 6px; flex: none; }

.stage { flex: 1; min-width: 0; display: flex; flex-direction: column; }
.doctabs { height: 23px; flex: none; background: #fff; }
.doctab { width: 108px; height: 23px; display: flex; align-items: center; background: #5aa4ba; color: #f4fbff; font-size: 12px; padding-left: 6px; white-space: nowrap; }
.part { width: 15px; height: 15px; margin-right: 4px; flex: none; }
.dtic { width: 12px; height: 12px; margin-left: 5px; flex: none; }
.dtx { margin-left: 5px; font-size: 12px; color: #fff; font-family: "DejaVu Sans", sans-serif; font-weight: 700; }
.viewport { flex: 1; position: relative; min-height: 0; background: #24262b; margin-left: 1px; border-bottom: 1px solid #a8a8a8; overflow: hidden; }
.scene { display: block; }
.axis { font: 13px "Liberation Sans", sans-serif; text-anchor: middle; }
.ax-y { fill: #2e8b2e; }
.ax-z { fill: #1a40c8; }
.ax-x { fill: #d8354a; }
.gauge { position: absolute; left: 1824px; top: 76px; width: 9px; height: 60px; border: 1px solid #777; border-radius: 3px; background: #17181b; display: flex; align-items: flex-end; }
.gauge b { display: block; width: 100%; height: 17px; border-radius: 2px; background: linear-gradient(#2e9e5a, #6fdc70); }
.ime { position: absolute; left: 1648px; top: 250px; width: 187px; height: 22px; background: #fff; display: flex; align-items: center; padding-left: 16px; gap: 6px; }
.ime-s { position: absolute; left: -18px; top: -4px; width: 26px; height: 26px; background: #f0571c; color: #fff; font: italic 700 24px/26px "Liberation Sans", sans-serif; text-align: center; border-radius: 3px; transform: rotate(-10deg); }
.ime-t { color: #1c75c8; font-weight: 700; font-size: 15px; line-height: 20px; width: 16px; text-align: center; }
.pn { font-size: 12px; margin-left: 3px; margin-right: 2px; }
.ime-i { width: 16px; height: 16px; flex: none; }
.ime-n { font: 700 6px "Liberation Sans", sans-serif; fill: #1c75c8; text-anchor: middle; }

.status { height: 22px; flex: none; background: #fff; display: flex; justify-content: flex-end; align-items: center; padding-right: 55px; }
.sticons { display: flex; gap: 4px; }
.sticons svg { width: 16px; height: 17px; }

.taskbar { height: 40px; flex: none; background: #0a0a0a; display: flex; align-items: stretch; }
.tk { width: 49px; display: flex; align-items: center; justify-content: center; flex: none; }
.tk svg { width: 24px; height: 24px; }
.tk.n3 { width: 48px; }
.tk.n3 svg { width: 22px; height: 22px; }
.tk.first { margin-left: 1px; }
.tk.active { background: #3a3a3a; border-bottom: 2px solid #72c69c; }
.tk-l { font: 700 10px "Liberation Sans", sans-serif; fill: #fff; text-anchor: middle; }
.tk-a { font: 700 22px "Liberation Serif", serif; fill: #b3201f; text-anchor: middle; }
.tray { margin-left: auto; display: flex; align-items: center; color: #fff; padding-right: 22px; }
.tri { width: 18px; height: 18px; margin-left: 6px; flex: none; }
.w-caret { width: 14px; height: 14px; }
.tri-zh { width: 18px; margin-left: 6px; font-size: 13px; text-align: center; }
.tri-s { width: 15px; height: 18px; margin-left: 9px; background: #f0571c; border-radius: 3px; color: #fff; font: italic 700 15px/18px "Liberation Sans", sans-serif; text-align: center; }
.clock { width: 72px; margin-left: 11px; margin-right: 12px; display: flex; flex-direction: column; align-items: center; font-size: 12px; line-height: 20px; }
.notif { width: 20px; height: 20px; margin-left: 0; }

.svg-t8 { font: 9px "Liberation Sans", sans-serif; text-anchor: middle; }
.svg-hb { font: 700 10px "Liberation Sans", sans-serif; text-anchor: middle; }
.svg-t7 { font: 8px "Liberation Sans", sans-serif; text-anchor: middle; }
.svg-t6 { font: 8px "Liberation Sans", sans-serif; text-anchor: middle; }
.svg-t14 { font: 15px "Liberation Sans", sans-serif; text-anchor: middle; }

.mark { position: absolute; left: 1637px; top: 985px; display: flex; gap: 9px; pointer-events: none; }
.mark-logo { width: 72px; height: 73px; flex: none; }
.mark-t { display: flex; flex-direction: column; padding-top: 8px; }
.mark-a { font: 700 42px/44px "Noto Sans CJK SC", sans-serif; color: rgba(255,255,255,.26); white-space: nowrap; }
.mark-b { margin-top: 2px; font: 400 17px/14px "Liberation Sans", sans-serif; color: rgba(255,255,255,.38); letter-spacing: 1.500px; white-space: nowrap; }
```
